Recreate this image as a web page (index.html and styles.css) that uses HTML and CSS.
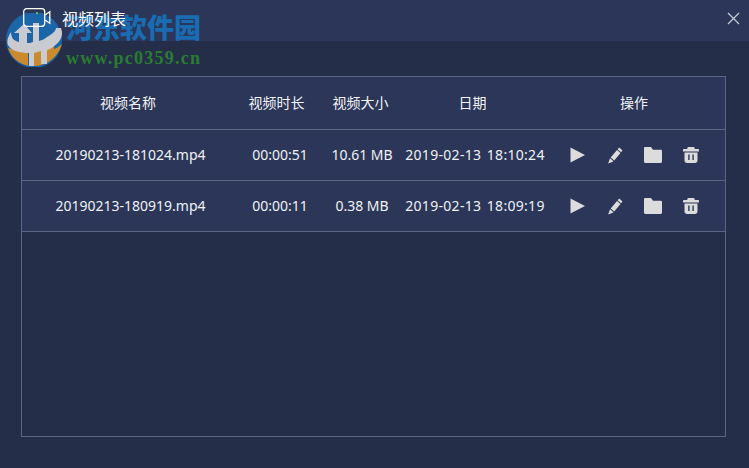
FILE: index.html
```html
<!DOCTYPE html>
<html lang="zh">
<head>
<meta charset="utf-8">
<title>视频列表</title>
<link rel="stylesheet" href="styles.css">
</head>
<body>
<div class="app">
  <header class="titlebar">
    <svg class="cam" width="28" height="19" viewBox="0 0 28 19" fill="none" stroke="#fff" stroke-width="1.3">
      <rect x=".7" y=".7" width="21" height="17.600" rx="3"/>
      <path d="M22 7l4.800-3.200v11.400L22 12"/>
      <circle cx="14" cy="5" r="1" fill="#8fd14f" stroke="none"/>
    </svg>
    <span class="title">视频列表</span>
    <svg class="close" width="13" height="13" viewBox="0 0 13 13" stroke="#c3c8d4" stroke-width="1.300" fill="none">
      <path d="M1 1l11 11M12 1L1 12"/>
    </svg>
  </header>
  <main class="content">
    <section class="table">
      <div class="row head">
        <div class="c-name">视频名称</div>
        <div class="c-time">视频时长</div>
        <div class="c-size">视频大小</div>
        <div class="c-date">日期</div>
        <div class="c-ops">操作</div>
      </div>
      <div class="row item">
        <div class="c-name">20190213-181024.mp4</div>
        <div class="c-time">00:00:51</div>
        <div class="c-size">10.61 MB</div>
        <div class="c-date">2019-02-13 18:10:24</div>
        <div class="c-ops icons">
          <svg class="i-play" width="16" height="16" viewBox="0 0 16 16"><path class="ic" d="M.5 .5L15 8 .5 15.500z"/></svg>
          <svg class="i-pen" width="16" height="17" viewBox="0 0 16 17"><path class="ic" d="M12.200.5l3.300 2.900-1.500 1.800-3.400-3zM10 3.100l3.500 3-6.300 7.300-3.500-3zM3 11.200l3.500 3-1.300.9-4.200 1.500.7-1.700z"/></svg>
          <svg class="i-folder" width="18" height="16" viewBox="0 0 18 16"><path class="ic" d="M0 1.200C0 .5.500 0 1.200 0H7l2 2.800h7.800c.7 0 1.200.5 1.200 1.200v10.800c0 .7-.5 1.200-1.200 1.200H1.200C.5 16 0 15.500 0 14.800z"/></svg>
          <svg class="i-trash" width="16" height="16" viewBox="0 0 16 16"><path class="ic" fill-rule="evenodd" d="M5.500 0h5c.6 0 1 .4 1.100 1l.2 1H15c.6 0 1 .5 1 1v1.500H0V3c0-.5.4-1 1-1h3.200l.2-1c.1-.6.5-1 1.100-1zM1.500 5.500h13v8c0 1.400-1.100 2.500-2.500 2.500H4c-1.400 0-2.500-1.100-2.500-2.500zM5.200 7.500v5.500h1.400V7.500zM9.400 7.500v5.500h1.400V7.500z"/></svg>
        </div>
      </div>
      <div class="row item">
        <div class="c-name">20190213-180919.mp4</div>
        <div class="c-time">00:00:11</div>
        <div class="c-size">0.38 MB</div>
        <div class="c-date">2019-02-13 18:09:19</div>
        <div class="c-ops icons">
          <svg class="i-play" width="16" height="16" viewBox="0 0 16 16"><path class="ic" d="M.5 .5L15 8 .5 15.500z"/></svg>
          <svg class="i-pen" width="16" height="17" viewBox="0 0 16 17"><path class="ic" d="M12.200.5l3.300 2.900-1.500 1.800-3.400-3zM10 3.100l3.500 3-6.300 7.300-3.500-3zM3 11.200l3.500 3-1.300.9-4.200 1.500.7-1.700z"/></svg>
          <svg class="i-folder" width="18" height="16" viewBox="0 0 18 16"><path class="ic" d="M0 1.200C0 .5.500 0 1.200 0H7l2 2.800h7.800c.7 0 1.200.5 1.200 1.200v10.800c0 .7-.5 1.200-1.200 1.200H1.200C.5 16 0 15.500 0 14.800z"/></svg>
          <svg class="i-trash" width="16" height="16" viewBox="0 0 16 16"><path class="ic" fill-rule="evenodd" d="M5.500 0h5c.6 0 1 .4 1.100 1l.2 1H15c.6 0 1 .5 1 1v1.500H0V3c0-.5.4-1 1-1h3.200l.2-1c.1-.6.5-1 1.100-1zM1.500 5.500h13v8c0 1.400-1.100 2.500-2.500 2.500H4c-1.400 0-2.500-1.100-2.500-2.500zM5.200 7.500v5.500h1.400V7.500zM9.400 7.500v5.500h1.400V7.500z"/></svg>
        </div>
      </div>
    </section>
  </main>
  <div class="watermark">
    <svg class="wm-logo" width="58" height="54" viewBox="0 0 58 54">
      <circle cx="29" cy="27" r="28" fill="#1a6cb2" opacity=".9"/>
      <path d="M3 35c4 12 14 18 26 18s24-8 28-22c-3 3-8 5-8 5v-8l-7 7v14h-5V36l-8 3v14h-6V40l-10-2z" fill="#cb8a2e"/>
      <path d="M56 15c3 8-1 14-8 19l-3 2-3 1v14h-6V38l-7 2v13h-5V40C15 40 6 38 3 32 1 28 4 22 6 19c0 6 3 9 8 10V20H9l10-9 8 9h-5v10c2 0 4 0 6-1V10h6v18c3-1 6-2 8-4 5-3 9-6 9-9z" fill="#c9cbd0"/>
    </svg>
    <div class="wm-text">
      <div class="wm-cn">河东软件园</div>
      <div class="wm-url">www.pc0359.cn</div>
    </div>
  </div>
</div>
</body>
</html>
```

FILE: styles.css
```css
* { box-sizing: border-box; }
html, body { margin: 0; padding: 0; }
body {
  width: 749px;
  height: 468px;
  overflow: hidden;
  background: #252e49;
  color: #f2f3f6;
  font-family: "Noto Sans CJK SC", "Noto Sans", sans-serif;
}
.app { position: relative; width: 749px; height: 468px; display: flex; flex-direction: column; }
.titlebar {
  height: 41px;
  flex: none;
  background: #2b3658;
  display: flex;
  align-items: center;
  padding: 0 9px 9px 23px;
}
.cam { flex: none; position: relative; z-index: 2; margin-top: 2px; }
.title { position: relative; z-index: 2; margin-left: 11px; font-size: 16px; line-height: 20px; margin-top: 4px; color: #fff; }
.close { margin-left: auto; margin-top: 4px; }
.content { flex: 1; padding: 35px 23px 31px 21px; }
.table { height: 100%; border: 1px solid #5b6685; }
.row {
  display: grid;
  align-items: center;
  text-align: center;
  background: #2b3658;
  border-bottom: 1px solid #5b6685;
}
.head { height: 53px; font-size: 14px; padding-bottom: 2px; grid-template-columns: 212px 85px 83px 141px 1fr; }
.item {
  height: 51px;
  padding-bottom: 2px;
  font-size: 14px;
  font-family: "Noto Sans", "Noto Sans CJK SC", sans-serif;
  color: #f0f1f4;
  grid-template-columns: 217px 82px 82px 144px 1fr;
}
.c-date { white-space: nowrap; }
.item .c-date { word-spacing: 1.5px; letter-spacing: .3px; }
.icons { display: flex; align-items: center; justify-content: flex-start; gap: 21px; padding-left: 23px; padding-top: 2px; }
.ic { fill: #dcdcdc; }
.watermark {
  position: absolute;
  z-index: 1;
  left: 5px;
  top: 13px;
  display: flex;
  gap: 3px;
  pointer-events: none;
}
.wm-logo { flex: none; }
.wm-cn {
  font-family: "Noto Sans CJK SC", serif;
  font-weight: 900;
  font-size: 27px;
  line-height: 32px;
  margin-top: -2px;
  color: #1a6cb2;
}
.wm-url {
  font-family: "Liberation Serif", serif;
  font-weight: 700;
  font-size: 18px;
  line-height: 20px;
  margin-top: 5px;
  letter-spacing: 1.25px;
  color: #2a7c32;
}
```
